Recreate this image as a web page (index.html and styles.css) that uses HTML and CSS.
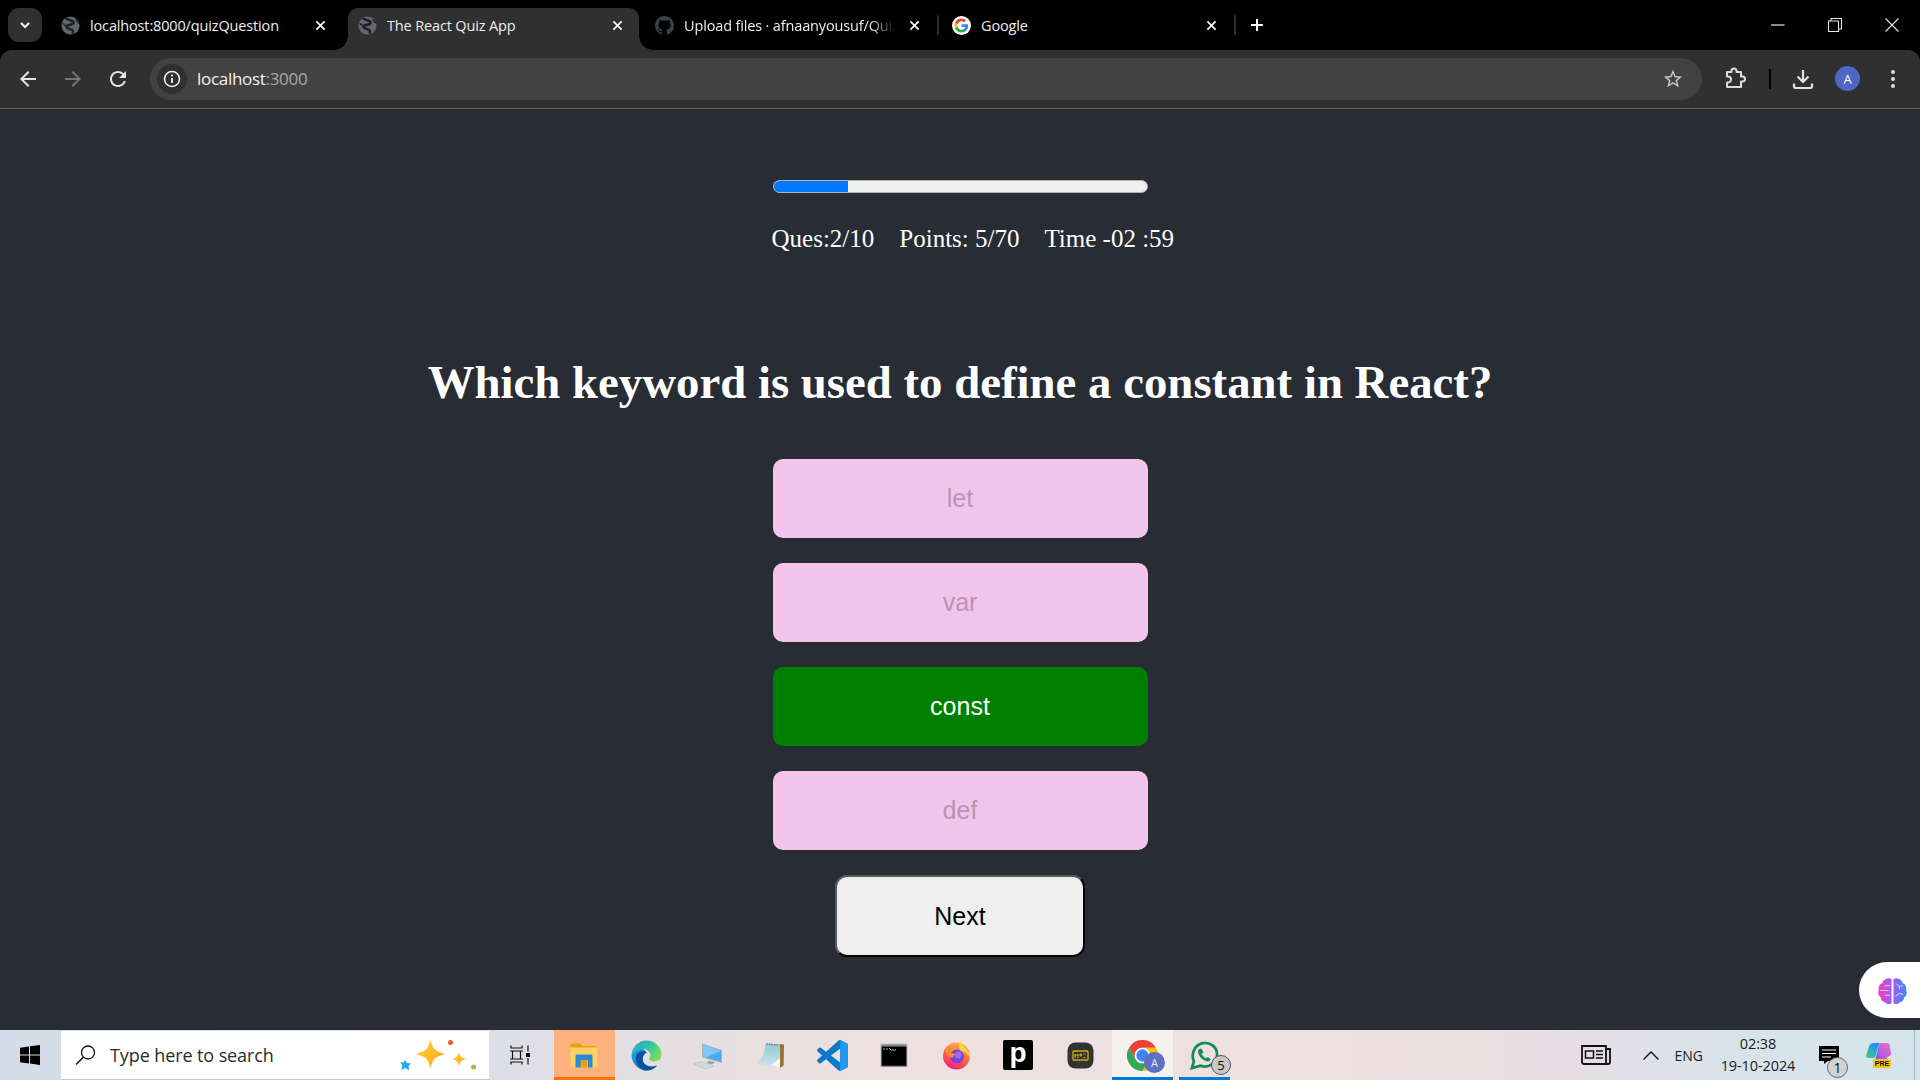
FILE: index.html
```html
<!DOCTYPE html>
<html lang="en">
<head>
<meta charset="utf-8">
<title>The React Quiz App</title>
<link rel="stylesheet" href="styles.css">
</head>
<body>
<svg class="defs" aria-hidden="true">
  <defs>
    <symbol id="globe" viewBox="0 0 20 20">
      <circle cx="10" cy="10" r="9.500" fill="#63666a"/>
      <path d="M5 2.500c2.500 2 6 1.500 8 3.500 1.500 2-2 3-4.500 3.500S5 11 6.500 12.500s5 1 6 3c.5 1 0 2-.5 3" fill="none" stroke="#1f2023" stroke-width="2.600"/>
      <path d="M1.500 8c1.500 0 2.500 1 3 2.500M15.500 3.500c1 1.500 2 3 3.500 4" fill="none" stroke="#1f2023" stroke-width="1.600"/>
    </symbol>
    <symbol id="x" viewBox="0 0 12 12">
      <path d="M1.500 1.500l9 9M10.500 1.500l-9 9" stroke="#fff" stroke-width="1.800" fill="none"/>
    </symbol>
  </defs>
</svg>

<header class="browser">
  <div class="tabstrip">
    <button class="tab-search" type="button">
      <svg class="ico12" viewBox="0 0 12 12"><path d="M2 4l4 4 4-4" stroke="#fff" stroke-width="2" fill="none"/></svg>
    </button>
    <div class="tab">
      <svg class="favicon"><use href="#globe"/></svg>
      <span class="tab-title">localhost:8000/quizQuestion</span>
      <svg class="tab-x"><use href="#x"/></svg>
    </div>
    <div class="tab active">
      <svg class="favicon"><use href="#globe"/></svg>
      <span class="tab-title">The React Quiz App</span>
      <svg class="tab-x"><use href="#x"/></svg>
    </div>
    <div class="tab sep">
      <svg class="favicon" viewBox="0 0 16 16"><path fill="#3b4045" d="M8 0C3.580 0 0 3.580 0 8c0 3.540 2.290 6.530 5.470 7.590.4.070.55-.17.55-.38 0-.19-.01-.82-.01-1.490-2.010.37-2.530-.49-2.690-.94-.09-.23-.48-.94-.82-1.130-.28-.15-.68-.52-.01-.53.63-.01 1.080.58 1.230.82.72 1.210 1.870.87 2.330.66.07-.52.28-.87.51-1.070-1.780-.2-3.640-.89-3.640-3.950 0-.87.31-1.590.82-2.150-.08-.2-.36-1.020.08-2.120 0 0 .67-.21 2.200.82.64-.18 1.320-.27 2-.27.68 0 1.360.09 2 .27 1.530-1.040 2.200-.82 2.200-.82.44 1.100.16 1.920.08 2.120.51.56.82 1.270.82 2.150 0 3.070-1.870 3.750-3.650 3.950.29.25.54.73.54 1.480 0 1.070-.01 1.930-.01 2.200 0 .21.15.46.55.38A8.013 8.013 0 0016 8c0-4.420-3.580-8-8-8z"/></svg>
      <span class="tab-title fade">Upload files · afnaanyousuf/QuizApp</span>
      <svg class="tab-x"><use href="#x"/></svg>
    </div>
    <div class="tab sep">
      <svg class="favicon" viewBox="0 0 24 24">
        <circle cx="12" cy="12" r="12" fill="#fff"/>
        <g transform="translate(2.400 2.400) scale(.8)">
          <path fill="#4285F4" d="M22.560 12.250c0-.78-.07-1.530-.2-2.250H12v4.260h5.920c-.26 1.370-1.040 2.530-2.210 3.310v2.770h3.570c2.080-1.920 3.280-4.740 3.280-8.090z"/>
          <path fill="#34A853" d="M12 23c2.970 0 5.460-.98 7.280-2.660l-3.570-2.770c-.98.66-2.230 1.060-3.710 1.060-2.860 0-5.290-1.930-6.160-4.530H2.180v2.840C3.990 20.530 7.700 23 12 23z"/>
          <path fill="#FBBC05" d="M5.840 14.090c-.22-.66-.35-1.360-.35-2.090s.13-1.430.35-2.090V7.070H2.180C1.430 8.550 1 10.220 1 12s.43 3.450 1.180 4.930l3.660-2.840z"/>
          <path fill="#EA4335" d="M12 5.380c1.620 0 3.060.56 4.210 1.640l3.150-3.150C17.450 2.090 14.970 1 12 1 7.700 1 3.990 3.470 2.180 7.070l3.660 2.840c.87-2.600 3.300-4.530 6.160-4.530z"/>
        </g>
      </svg>
      <span class="tab-title">Google</span>
      <svg class="tab-x"><use href="#x"/></svg>
    </div>
    <svg class="newtab" viewBox="0 0 14 14"><path d="M7 1v12M1 7h12" stroke="#fff" stroke-width="2" fill="none"/></svg>
    <div class="winctl">
      <svg class="win-ico" viewBox="0 0 14 14"><path d="M0 7h13.500" stroke="#e6e6e6" stroke-width="1.200"/></svg>
      <svg class="win-ico" viewBox="0 0 14 14"><path d="M.5 3h10v10.500H.5zM3 3V.5h10.500V11H10.500" stroke="#e6e6e6" stroke-width="1.100" fill="none"/></svg>
      <svg class="win-ico" viewBox="0 0 14 14"><path d="M.5.5l13 13M13.500.5l-13 13" stroke="#e6e6e6" stroke-width="1.100" fill="none"/></svg>
    </div>
  </div>
  <div class="toolbar">
    <svg class="nav" viewBox="0 0 24 24"><path fill="#e3e3e3" d="M20 11H7.830l5.590-5.590L12 4l-8 8 8 8 1.410-1.410L7.830 13H20z"/></svg>
    <svg class="nav" viewBox="0 0 24 24"><path fill="#757575" d="M4 11h12.170l-5.590-5.590L12 4l8 8-8 8-1.410-1.410L16.170 13H4z"/></svg>
    <svg class="nav" viewBox="0 0 24 24"><path fill="#e3e3e3" d="M17.650 6.350A7.958 7.958 0 0012 4c-4.420 0-7.990 3.580-7.990 8s3.570 8 7.990 8c3.730 0 6.840-2.550 7.730-6h-2.080A5.990 5.990 0 0112 18c-3.310 0-6-2.690-6-6s2.690-6 6-6c1.660 0 3.140.69 4.220 1.780L13 11h7V4z"/></svg>
    <div class="omnibox">
      <span class="info">
        <svg class="ico18" viewBox="0 0 18 18"><circle cx="9" cy="9" r="7.500" fill="none" stroke="#f0f0f0" stroke-width="1.600"/><path d="M9 8v5" stroke="#f0f0f0" stroke-width="1.800"/><circle cx="9" cy="5.500" r="1.100" fill="#f0f0f0"/></svg>
      </span>
      <span class="url">localhost<span class="url-dim">:3000</span></span>
      <svg class="star" viewBox="0 0 24 24"><path fill="#c7c7c7" d="M22 9.240l-7.190-.62L12 2 9.190 8.630 2 9.240l5.460 4.730L5.820 21 12 17.270 18.180 21l-1.630-7.030L22 9.240zM12 15.400l-3.760 2.270 1-4.280-3.320-2.880 4.380-.38L12 6.100l1.710 4.040 4.380.38-3.320 2.880 1 4.280L12 15.400z"/></svg>
    </div>
    <div class="actions">
      <svg class="act puzzle" viewBox="0 0 24 24"><path fill="none" stroke="#dcdcdc" stroke-width="2" stroke-linejoin="round" d="M4 5h4.500V4a2.500 2.500 0 015 0v1H18v4.500h1.500a2.500 2.500 0 010 5H18V20H4v-4.500h1a3 3 0 000-6H4z"/></svg>
      <span class="vsep"></span>
      <svg class="act dl" viewBox="0 0 24 24"><path fill="none" stroke="#e3e3e3" stroke-width="2.200" d="M12 3v11M6.500 9.500L12 15l5.500-5.500M3 16.500V19a2 2 0 002 2h14a2 2 0 002-2v-2.500"/></svg>
      <span class="avatar">A</span>
      <svg class="act dots" viewBox="0 0 6 24"><circle cx="3" cy="5" r="2" fill="#dedede"/><circle cx="3" cy="12" r="2" fill="#dedede"/><circle cx="3" cy="19" r="2" fill="#dedede"/></svg>
    </div>
  </div>
</header>

<main class="page">
  <div class="quiz">
    <div class="progress"><div class="progress-fill"></div></div>
    <p class="stats"><span>Ques:2/10</span><span>Points: 5/70</span><span>Time -02 :59</span></p>
  </div>
  <h1 class="question">Which keyword is used to define a constant in React?</h1>
  <div class="options">
    <button class="option" type="button">let</button>
    <button class="option" type="button">var</button>
    <button class="option correct" type="button">const</button>
    <button class="option" type="button">def</button>
  </div>
  <button class="next" type="button">Next</button>

  <div class="brain">
    <svg class="brain-ico" viewBox="0 0 32 32">
      <defs><linearGradient id="bg" x1="0" x2="1" y1="0" y2="0"><stop offset="0" stop-color="#f03cc0"/><stop offset=".5" stop-color="#a05ff0"/><stop offset="1" stop-color="#3f86f5"/></linearGradient></defs>
      <path fill="url(#bg)" d="M15 4v25c-1 1.500-5 1.500-6.500-1-2.500 0-4.500-2-4.300-4.500C1.500 22 .5 18 2 15.500 1 12 3 9 5.500 8.500 6 5 11 2 15 4zM17 4c4-2 9 1 9.500 4.500C29 9 31 12 30 15.500c1.500 2.500.5 6.500-2.200 8 .2 2.500-1.800 4.500-4.300 4.500-1.500 2.500-5.500 2.500-6.500 1z"/>
      <path fill="none" stroke="#fff" stroke-width="1" opacity=".75" d="M3 16h9M8 11h5M8 21h5M20 9l3 3 4-1M23 12v3M19 22l4-3 4 1"/>
    </svg>
  </div>
</main>

<footer class="taskbar">
  <svg class="winlogo" viewBox="0 0 20 20"><path fill="#000" d="M0 2.800L9 1.500v8H0zM10 1.300L20 0v9.500H10zM0 10.500h9v8L0 17.200zM10 10.500h10V20l-10-1.400z"/></svg>
  <div class="search">
    <svg class="search-ico" viewBox="0 0 21 20"><circle cx="13" cy="7.500" r="6.500" fill="none" stroke="#111" stroke-width="1.300"/><path d="M8.500 12L1 19.500" stroke="#111" stroke-width="1.500"/></svg>
    <span class="search-text">Type here to search</span>
    <svg class="sparkle" viewBox="0 0 78 36">
      <defs><linearGradient id="sp" x1="0" y1="0" x2="1" y2="1"><stop offset="0" stop-color="#ffd02e"/><stop offset="1" stop-color="#f7a823"/></linearGradient></defs>
      <path fill="url(#sp)" d="M31.500 3c1 3 2 6.500 3.500 8.500 2 2.500 6 4 11 5.500-5 1.500-9 3-11 5.500-1.500 2-2.500 5.500-3.500 8.500-1-3-2-6.500-3.500-8.500-2-2.500-6-4-11-5.500 5-1.500 9-3 11-5.500 1.500-2 2.500-5.500 3.500-8.500z"/>
      <path fill="url(#sp)" d="M60 15c.8 3.500 2.500 6 7 7-4.500 1-6.200 3.500-7 7-.8-3.500-2.500-6-7-7 4.500-1 6.200-3.500 7-7z"/>
      <path fill="#21aee8" d="M6 23l2 3 4.500.5-3 2.500.5 4.500-3.500-2.500L2 33l1.500-4L1.500 25l3.200.5z"/>
      <circle cx="51.500" cy="5.500" r="2.500" fill="#ee5a24"/>
      <circle cx="74.500" cy="30" r="2.500" fill="#8cc63f"/>
    </svg>
  </div>
  <svg class="taskview" viewBox="0 0 20 20"><path fill="none" stroke="#111" stroke-width="1.200" d="M1 .5v2.500h11V.5M1 19.500V17h11v2.500M2.500 6h8v8h-8zM0 6h13M0 14h13M18 .5v6M18 13v6.500"/><rect x="16" y="8" width="4" height="4" fill="#111"/></svg>
  <div class="apps">
    <div class="app running-orange">
      <svg class="app-ico" viewBox="0 0 31 31">
        <path fill="#e3a40f" d="M1.500 5a1.500 1.500 0 011.500-1.500h8l2.500 2.500h12l2.500 1v5H1.500z"/>
        <path fill="#fbd35e" d="M1.500 7.500h27V26a1.500 1.500 0 01-1.500 1.500H3A1.500 1.500 0 011.500 26z"/>
        <path fill="#2b87d8" d="M6.500 27.500V16a1.500 1.500 0 011.500-1.500h14a1.500 1.500 0 011.500 1.500v11.500H19V21a1 1 0 00-1-1h-5a1 1 0 00-1 1v6.500z"/>
        <rect x="11.500" y="20" width="7" height="7.500" fill="#e8a20e"/>
      </svg>
    </div>
    <div class="app">
      <svg class="app-ico" viewBox="0 0 32 32">
        <defs>
          <linearGradient id="eg" x1="0" y1="0" x2="1" y2=".6"><stop offset="0" stop-color="#1aa6cf"/><stop offset=".6" stop-color="#36c8a0"/><stop offset="1" stop-color="#7fdb5a"/></linearGradient>
          <linearGradient id="eb" x1="0" y1="0" x2=".6" y2="1"><stop offset="0" stop-color="#1ba0e2"/><stop offset="1" stop-color="#0c7fd0"/></linearGradient>
        </defs>
        <path fill="url(#eg)" d="M.5 15C1.500 7 8 .5 16 .5 24.500.5 31.500 7 31.500 15.500c0 4-3 6.500-7.500 6.500-3 0-5.500-1.500-5.500-2.500 0-.6 1.500-1.200 1.500-3.500 0-4-4-7-8.500-7C7 9 2.500 12 .5 15z"/>
        <path fill="url(#eb)" d="M.5 15C.5 24 7.500 31.500 16 31.500c4 0 8-1.800 10.500-4.500.4-.5 0-1-.6-.7-1.400.7-3 1-4.600 1-5.500 0-9.300-3.800-9.300-8 0-3 1.700-5.500 4.400-6.700C14.500 11.500 13 9 12 9 7 9 2.500 12 .5 15z"/>
        <path fill="#0b4f9e" d="M26.300 26.500c-1.500.7-3.200 1-5 1-5.500 0-9.300-3.800-9.300-8 0-3 1.700-5.500 4.400-6.700-1-.8-2.900-1.300-4.400-1.300-4 0-7 3-7 7.500 0 6 5 12.500 11 12.500 4 0 7.500-1.800 10.300-5z"/>
      </svg>
    </div>
    <div class="app">
      <svg class="app-ico" viewBox="0 0 31 31">
        <path fill="#d3d9dd" stroke="#aab1b6" stroke-width=".5" d="M1.500 24l6.500-2.500 12.500 4.500-8.500 3z"/>
        <path fill="#9aa4ab" d="M15 20.500l4 1 3.500 1-4 2-5-1.500 1.500-.5z"/>
        <path fill="#aab3b9" d="M9 3.500l20 6.500v13l-20-5.500z"/>
        <path fill="#49aaee" d="M10 5l18 5.700v11L10 16.800z"/>
        <path fill="#7fc9f7" d="M10 5l18 5.700L13 17.500l-3-.7z"/>
      </svg>
    </div>
    <div class="app">
      <svg class="app-ico" viewBox="0 0 31 31">
        <defs><linearGradient id="np" x1="0" y1="0" x2="0" y2="1"><stop offset="0" stop-color="#8fc8d6"/><stop offset="1" stop-color="#cfe6ea"/></linearGradient></defs>
        <path fill="#9a7336" d="M25 4l4 .5-.3 21L25 28z"/>
        <path fill="url(#np)" d="M10.500 3.500L25 4.500V28L1.500 23.500C7 20 10 12 10.500 3.500z"/>
        <path fill="#f3f6f6" d="M16 25l9-7v10z"/>
        <path d="M11.500 4l13 1" stroke="#6f8790" stroke-width="1.500" stroke-dasharray="1.500 1"/>
      </svg>
    </div>
    <div class="app">
      <svg class="app-ico" viewBox="0 0 100 100">
        <path fill="#0a79c9" d="M70.900 99.300a6.200 6.200 0 004.900-.2l20.600-9.900a6.200 6.200 0 003.500-5.600V16.400a6.200 6.200 0 00-3.500-5.600L75.800.9a6.200 6.200 0 00-7.100 1.200L29.300 38 12.100 25a4.200 4.200 0 00-5.300.2L1.300 30.300a4.200 4.200 0 000 6.200L16.200 50 1.300 63.500a4.200 4.200 0 000 6.200l5.500 5a4.200 4.200 0 005.300.2l17.200-13 39.400 36a6.200 6.200 0 002.200 1.400zM75 27.300L45.100 50 75 72.700z" fill-rule="evenodd"/>
        <path fill="#1e9af0" d="M75.800.9l20.600 9.900a6.200 6.200 0 013.500 5.600v67.200a6.200 6.200 0 01-3.500 5.600l-20.600 9.900a6.200 6.200 0 01-7.100-1.200c2.300 2.300 6.300.7 6.300-2.600V3.700c0-3.300-4-4.900-6.300-2.600a6.200 6.200 0 017.100-.2z"/>
      </svg>
    </div>
    <div class="app">
      <svg class="app-ico" viewBox="0 0 31 31">
        <rect x="1.500" y="3.500" width="27" height="23.500" fill="#b9bdc1"/>
        <rect x="2.500" y="4.500" width="25" height="2" fill="#7e8185"/>
        <rect x="2.500" y="6.500" width="25" height="19.500" fill="#000"/>
        <path d="M4 9h2M7 9h2M10 8l2 2h5" stroke="#bbb" stroke-width=".9" fill="none"/>
        <path d="M2.500 26h25" stroke="#54575a" stroke-width="1"/>
      </svg>
    </div>
    <div class="app">
      <svg class="app-ico" viewBox="0 0 31 31">
        <defs><linearGradient id="ff" x1=".7" y1="0" x2=".3" y2="1"><stop offset="0" stop-color="#ffb53f"/><stop offset=".5" stop-color="#ff6a3a"/><stop offset="1" stop-color="#f5197c"/></linearGradient></defs>
        <circle cx="15.500" cy="16" r="13.500" fill="url(#ff)"/>
        <path fill="#ffd53a" d="M19.500.5c.2 3.500 2.500 5 5 7.500 2.500 2.800 4.500 6 4.500 9.500-2.500-4.500-6-6.500-10-6.500-1-4 -1-7.500.5-10.500z"/>
        <path fill="#ff9a2e" d="M5 5c0 3 1.500 5 3 6 2-2 4-3.500 7-3.500L12 12 5 13z"/>
        <circle cx="16" cy="16.500" r="7" fill="#7543e6"/>
        <circle cx="17.500" cy="15" r="3.500" fill="#a866ee"/>
        <path fill="#ff8a2c" d="M5 14c3-1 7-1.500 10 .5-2 .5-3 1.500-3 3-3 .5-6-1-7-3.500z"/>
      </svg>
    </div>
    <div class="app">
      <span class="pbox">p</span>
    </div>
    <div class="app">
      <svg class="app-ico" viewBox="0 0 31 31"><rect x="2.500" y="2.500" width="26" height="26" rx="8" fill="#303234"/><rect x="8" y="11" width="15" height="9" rx="1" fill="none" stroke="#d9a90e" stroke-width="1.300"/><path d="M10 18v-4l1.500 2 1.500-2v4M15 14h1.500v2H15zM18.500 14h2M18.500 17.500h2" fill="none" stroke="#d9a90e" stroke-width="1"/></svg>
    </div>
    <div class="app running-active">
      <span class="app-stack">
        <svg class="app-ico" viewBox="0 0 48 48">
          <path fill="#ea4335" d="M3.200 12A24 24 0 0144.800 12H24A12 12 0 0013.600 30z"/>
          <path fill="#34a853" d="M3.200 12A24 24 0 0024 48L34.400 30A12 12 0 0113.600 30z"/>
          <path fill="#fbbc04" d="M24 48A24 24 0 0044.800 12H24A12 12 0 0134.400 30z"/>
          <circle cx="24" cy="24" r="12" fill="#fff"/>
          <circle cx="24" cy="24" r="9.500" fill="#4285f4"/>
        </svg>
        <span class="profile-dot">A</span>
      </span>
    </div>
    <div class="app running">
      <span class="app-stack">
        <svg class="app-ico" viewBox="0 0 32 32">
          <path fill="none" stroke="#128c54" stroke-width="2.800" d="M3 29l2-7C2 15 5 6 13 3.500 21 1 29 7 29 15c0 9-9 14.500-17 11.500z"/>
          <path fill="#128c54" d="M11 9c-2 1-2 3-1 6 1.500 3.500 4.500 6 8 7 2.500.5 4-.5 4.500-2.500l-3.500-2-1.500 1.500c-2-1-3.500-2.500-4.500-4.500L15 13l-2-4z"/>
        </svg>
        <span class="count-badge">5</span>
      </span>
    </div>
  </div>
  <div class="tray">
    <svg class="news" viewBox="0 0 30 20"><path fill="none" stroke="#111" stroke-width="1.800" d="M1 1h24v16a2 2 0 002 2H3a2 2 0 01-2-2zM25 4h4v13a2 2 0 01-2 2"/><path fill="none" stroke="#111" stroke-width="1.500" d="M4.500 6h8v7h-8zM15 6h7M15 9.500h7M15 13h7"/></svg>
    <svg class="caret" viewBox="0 0 16 9"><path d="M.5 8.500L8 1l7.500 7.500" fill="none" stroke="#111" stroke-width="1.300"/></svg>
    <span class="lang">ENG</span>
    <span class="clock"><span>02:38</span><span>19-10-2024</span></span>
    <span class="notify">
      <svg class="notify-ico" viewBox="0 0 20 18"><path fill="#000" d="M0 0h20v15H9l-4 3v-3H0z"/><path d="M3 4h14M3 7.500h14M3 11h9" stroke="#fff" stroke-width="1"/></svg>
      <span class="notify-badge">1</span>
    </span>
    <span class="copilot">
      <svg class="copilot-ico" viewBox="0 0 25 20">
        <defs>
          <linearGradient id="cp" x1="0" y1="1" x2=".6" y2="0"><stop offset="0" stop-color="#52c95c"/><stop offset=".5" stop-color="#25b5c9"/><stop offset="1" stop-color="#2a8cf0"/></linearGradient>
          <linearGradient id="cq" x1="1" y1="0" x2="0" y2="1"><stop offset="0" stop-color="#f06fb4"/><stop offset=".6" stop-color="#b45ee8"/><stop offset="1" stop-color="#6f5cf0"/></linearGradient>
        </defs>
        <path fill="url(#cq)" d="M15 1h6c1.700 0 3 1.200 2.800 3L25 11c.3 2-1 3.500-3 3.500L19 19h-8c-1.500 0-2-1-1.500-2.500L13 3c.4-1.300 1-2 2-2z"/>
        <path fill="url(#cp)" d="M8 1h6.500c-1 .3-1.500 1-1.800 2L9.500 14c-.5 1.500-1.500 2-3 2H2.500C.8 16-.2 14.800.2 13L3 4.500C3.600 2 5.500 1 8 1z"/>
      </svg>
      <span class="pre">PRE</span>
    </span>
    <span class="show-desktop"></span>
  </div>
</footer>
</body>
</html>
```
FILE: styles.css
```css
* { box-sizing: border-box; }
html, body { margin: 0; height: 100%; }
body {
  display: flex;
  flex-direction: column;
  width: 1920px;
  height: 1080px;
  overflow: hidden;
  background: #282c34;
  font-family: "Liberation Serif", serif;
}
.defs { display: none; }

/* browser chrome */
.browser { flex: 0 0 109px; background: #000; font-family: "Open Sans", "Noto Sans", sans-serif; }
.tabstrip { display: flex; align-items: flex-start; height: 50px; padding-left: 8px; color: #f0f0f0; }
.tab-search {
  flex: 0 0 34px; height: 34px; margin-top: 8px; padding: 0;
  display: flex; align-items: center; justify-content: center;
  background: #303030; border: 0; border-radius: 11px;
}
.ico12 { width: 12px; height: 12px; }
.tab {
  position: relative;
  flex: 0 0 297px;
  min-width: 0;
  height: 42px;
  margin-top: 8px;
  padding: 0 21px 0 11px;
  display: flex;
  align-items: center;
  border-radius: 10px 10px 0 0;
}
.tab-search + .tab { margin-left: 8px; }
.tab.active {
  flex-basis: 291px;
  margin-left: 1px;
  margin-right: 5px;
  padding: 0 16px 0 10px;
  background: #303030;
}
.tab.active::before, .tab.active::after {
  content: ""; position: absolute; bottom: 0; width: 14px; height: 14px;
}
.tab.active::before { left: -14px; background: radial-gradient(circle at 0 0, #000 13.500px, #303030 14px); }
.tab.active::after { right: -14px; background: radial-gradient(circle at 100% 0, #000 13.500px, #303030 14px); }
.tab.sep::after {
  content: ""; position: absolute; right: 2px; top: 7px; width: 2px; height: 20px; background: #2b2b2b;
}
.favicon { flex: 0 0 19px; width: 19px; height: 19px; margin-top: -8px; }
.tab-title {
  flex: 1; min-width: 0; margin-left: 10px; margin-top: -8px;
  font-size: 14.500px; letter-spacing: -.15px; white-space: nowrap; overflow: hidden; color: #eee;
}
.tab-title.fade { -webkit-mask-image: linear-gradient(90deg, #000 88%, transparent 100%); mask-image: linear-gradient(90deg, #000 88%, transparent 100%); }
.tab-x { flex: 0 0 11px; width: 11px; height: 11px; margin-left: 14px; margin-top: -8px; }
.newtab { flex: 0 0 14px; width: 14px; height: 14px; margin: 18px 0 0 12px; }
.winctl { margin-left: auto; display: flex; gap: 43px; padding: 18px 21px 0 0; }
.win-ico { width: 14px; height: 14px; }

.toolbar {
  height: 59px;
  display: flex;
  align-items: center;
  padding: 0 0 1px 16px;
  background: #303030;
  border-bottom: 1px solid #5c5d60;
  border-radius: 12px 12px 0 0;
}
.nav { flex: 0 0 24px; width: 24px; height: 24px; margin-right: 21px; }
.nav:nth-child(3) { margin-right: 20px; }
.omnibox {
  flex: 0 0 1552px; height: 42px;
  display: flex; align-items: center;
  padding: 0 18px 0 7px;
  background: #424242; border-radius: 21px;
}
.info { width: 30px; height: 30px; border-radius: 50%; background: #303030; display: flex; align-items: center; justify-content: center; }
.ico18 { width: 18px; height: 18px; }
.url { margin-left: 10px; font-size: 17px; letter-spacing: -.3px; color: #f2f2f2; }
.url-dim { color: #a8a8a8; }
.star { width: 22px; height: 22px; margin-left: auto; }
.actions { flex: 1; display: flex; align-items: center; }
.act { flex: none; }
.puzzle { width: 24px; height: 24px; margin-left: 21px; }
.vsep { width: 2px; height: 20px; background: #000; margin-left: 22px; }
.dl { width: 24px; height: 24px; margin-left: 20px; }
.avatar {
  width: 25px; height: 25px; margin-left: 20px; border-radius: 50%;
  background: #5166c4; color: #fff; font-size: 13px; display: flex; align-items: center; justify-content: center;
}
.dots { width: 6px; height: 24px; margin-left: 30px; }

/* quiz */
.page {
  position: relative;
  flex: 1;
  display: flex;
  flex-direction: column;
  align-items: center;
  padding-top: 71px;
  color: #fff;
}
.quiz { width: 375px; }
.progress {
  height: 13px; overflow: hidden;
  background: #efefef; border: 1px solid #b2b2b2; border-radius: 7px;
}
.progress-fill { width: 20%; height: 100%; background: #007bff; }
.stats {
  display: flex; gap: 25px;
  margin: 31px 0 0 -1px;
  white-space: nowrap;
  font-size: 25px; line-height: 30px;
}
.question {
  margin: 102px 0 0;
  font-size: 46.800px; line-height: 52px; font-weight: 700; white-space: nowrap;
}
.options { display: flex; flex-direction: column; gap: 25px; margin-top: 51px; width: 375px; }
.option {
  height: 79px; border: 0; border-radius: 10px;
  background: #f3c4eb; color: #bb93b4;
  font-family: "Liberation Sans", sans-serif; font-size: 25px;
}
.option.correct { background: #008000; color: #fff; }
.next {
  width: 250px; height: 82px; margin-top: 25px;
  background: #efefef; color: #000;
  border: 2px solid; border-color: #5a5a5a #000 #000 #5a5a5a; border-radius: 12px;
  font-family: "Liberation Sans", sans-serif; font-size: 25px;
}
.brain {
  position: absolute; right: 0; bottom: 12px;
  width: 61px; height: 56px; padding-left: 18px;
  display: flex; align-items: center;
  background: #fff; border-radius: 28px 0 0 28px;
}
.brain-ico { width: 31px; height: 31px; }

/* taskbar */
.taskbar {
  flex: 0 0 50px;
  display: flex; align-items: center;
  font-family: "Open Sans", "Noto Sans", sans-serif;
  background: linear-gradient(90deg, #d3dce8 0, #dcdee6 25%, #eee0de 45%, #eee0de 70%, #e9dee3 80%, #d9e3ea 90%, #d4e4ec 100%);
}
.winlogo { flex: none; width: 20px; height: 20px; margin-left: 20px; }
.search {
  flex: 0 0 428px; height: 49px; margin-left: 21px; margin-top: 1px;
  display: flex; align-items: center; padding-left: 14px;
  background: #fff; border-bottom: 1px solid #c4c6c8;
}
.search-ico { width: 21px; height: 20px; }
.search-text { margin-left: 14px; font-size: 18px; letter-spacing: -.1px; color: #2b2b2b; }
.sparkle { width: 78px; height: 36px; margin-left: auto; margin-right: 12px; }
.taskview { flex: none; width: 20px; height: 20px; margin-left: 21px; }
.apps { display: flex; height: 50px; margin-left: 23px; }
.app {
  position: relative;
  flex: 0 0 62px; height: 50px;
  display: flex; align-items: center; justify-content: center;
}
.app-ico { width: 31px; height: 31px; display: block; }
.running-orange { flex-basis: 61px; margin-left: 1px; background: #fdb27d; border-bottom: 3px solid #f97316; }
.running-active { flex-basis: 61px; margin-left: 1px; background: #f5f1ef; border-bottom: 3px solid #0078d4; }
.running { flex-basis: 51px; margin-left: 6px; border-bottom: 3px solid #0078d4; }
.running-orange .app-ico, .running-active .app-stack, .running .app-stack { margin-top: 3px; }
.pbox {
  width: 30px; height: 30px; background: #000; color: #fff; border-radius: 2px;
  display: flex; align-items: center; justify-content: center;
  font: 700 28px/26px "Liberation Sans", sans-serif; padding-bottom: 4px;
}
.app-stack { position: relative; width: 31px; height: 31px; display: block; }
.profile-dot {
  position: absolute; right: -7px; bottom: -2px; width: 21px; height: 21px; border-radius: 50%;
  background: #5f6fc4; color: #e8e8f5; font-size: 11px; display: flex; align-items: center; justify-content: center;
}
.count-badge {
  position: absolute; right: -11px; bottom: -4px; width: 20px; height: 20px; border-radius: 50%;
  background: #c8c8c8; border: 1px solid #555; color: #111; font-size: 13px; display: flex; align-items: center; justify-content: center;
}
.tray { margin-left: auto; display: flex; align-items: center; height: 50px; color: #1c1c1c; }
.news { width: 30px; height: 20px; }
.caret { width: 16px; height: 9px; margin-left: 32px; }
.lang { margin-left: 16px; font-size: 14px; }
.clock { width: 76px; margin-left: 17px; display: flex; flex-direction: column; align-items: center; font-size: 14.500px; line-height: 22px; letter-spacing: -.1px; }
.notify { position: relative; margin-left: 23px; width: 20px; height: 18px; display: block; }
.notify-ico { width: 20px; height: 18px; display: block; }
.notify-badge {
  position: absolute; right: -9px; bottom: -14px; width: 21px; height: 21px; border-radius: 50%;
  background: #d0d2d4; border: 1px solid #666; color: #111; font-size: 14px;
  display: flex; align-items: center; justify-content: center;
}
.copilot { position: relative; display: block; margin-left: 27px; width: 25px; height: 24px; margin-bottom: 2px; }
.copilot-ico { width: 25px; height: 20px; display: block; }
.pre {
  position: absolute; right: 0; bottom: -2px; width: 18px; height: 9px; border-radius: 2px;
  background: #f6c20f; color: #111; font: 700 7px/9px "Liberation Sans", sans-serif; text-align: center;
}
.show-desktop { width: 6px; height: 50px; margin-left: 23px; border-left: 1px solid #aab6bd; }
```
